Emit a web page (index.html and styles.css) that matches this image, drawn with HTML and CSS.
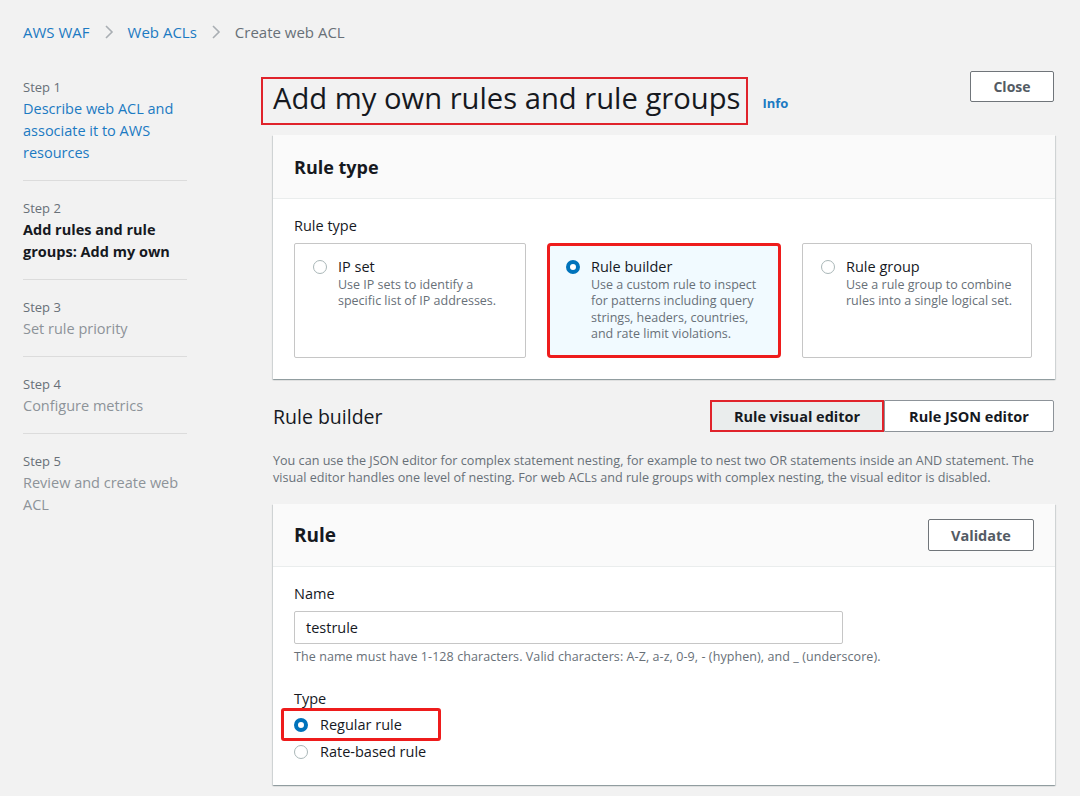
FILE: index.html
```html
<!DOCTYPE html>
<html lang="en">
<head>
<meta charset="utf-8">
<title>Create web ACL</title>
<link rel="stylesheet" href="styles.css">
</head>
<body>
<nav class="crumbs">
  <a class="crumb-link">AWS WAF</a>
  <svg class="chev" width="10" height="16" viewBox="0 0 10 16"><path d="M2 2l6 6-6 6" fill="none" stroke="#a9aeb3" stroke-width="1.6"/></svg>
  <a class="crumb-link">Web ACLs</a>
  <svg class="chev" width="10" height="16" viewBox="0 0 10 16"><path d="M2 2l6 6-6 6" fill="none" stroke="#a9aeb3" stroke-width="1.6"/></svg>
  <span class="crumb-current">Create web ACL</span>
</nav>
<div class="layout">
  <aside class="steps">
    <div class="step">
      <div class="step-num">Step 1</div>
      <div class="step-title link">Describe web ACL and associate it to AWS resources</div>
    </div>
    <div class="step">
      <div class="step-num">Step 2</div>
      <div class="step-title active">Add rules and rule groups: Add my own</div>
    </div>
    <div class="step">
      <div class="step-num">Step 3</div>
      <div class="step-title muted">Set rule priority</div>
    </div>
    <div class="step">
      <div class="step-num">Step 4</div>
      <div class="step-title muted">Configure metrics</div>
    </div>
    <div class="step last">
      <div class="step-num">Step 5</div>
      <div class="step-title muted">Review and create web ACL</div>
    </div>
  </aside>
  <main class="main">
    <div class="page-head">
      <h1 class="page-title marked">Add my own rules and rule groups</h1>
      <a class="info">Info</a>
      <button class="btn close-btn">Close</button>
    </div>

    <section class="panel">
      <div class="panel-head"><h2>Rule type</h2></div>
      <div class="panel-body">
        <div class="field-label">Rule type</div>
        <div class="tiles">
          <div class="tile">
            <span class="radio"></span>
            <div>
              <div class="tile-title">IP set</div>
              <div class="tile-desc">Use IP sets to identify a specific list of IP addresses.</div>
            </div>
          </div>
          <div class="tile selected">
            <span class="radio on"></span>
            <div>
              <div class="tile-title">Rule builder</div>
              <div class="tile-desc">Use a custom rule to inspect for patterns including query strings, headers, countries, and rate limit violations.</div>
            </div>
          </div>
          <div class="tile">
            <span class="radio"></span>
            <div>
              <div class="tile-title">Rule group</div>
              <div class="tile-desc">Use a rule group to combine rules into a single logical set.</div>
            </div>
          </div>
        </div>
      </div>
    </section>

    <div class="builder-head">
      <h2 class="builder-title">Rule builder</h2>
      <div class="seg">
        <button class="seg-btn seg-on">Rule visual editor</button>
        <button class="seg-btn">Rule JSON editor</button>
      </div>
    </div>
    <p class="builder-desc">You can use the JSON editor for complex statement nesting, for example to nest two OR statements inside an AND statement. The visual editor handles one level of nesting. For web ACLs and rule groups with complex nesting, the visual editor is disabled.</p>

    <section class="panel rule-panel">
      <div class="panel-head rule-head">
        <h2>Rule</h2>
        <button class="btn validate-btn">Validate</button>
      </div>
      <div class="panel-body rule-body">
        <div class="field-label">Name</div>
        <div class="input">testrule</div>
        <div class="hint">The name must have 1-128 characters. Valid characters: A-Z, a-z, 0-9, - (hyphen), and _ (underscore).</div>
        <div class="field-label type-label">Type</div>
        <div class="opt marked-opt"><span class="radio on"></span><span>Regular rule</span></div>
        <div class="opt"><span class="radio"></span><span>Rate-based rule</span></div>
      </div>
    </section>
  </main>
</div>
</body>
</html>
```
FILE: styles.css
```css
* { box-sizing: border-box; }
html, body { margin: 0; }
body {
  background: #f2f2f2;
  font-family: "Open Sans", "Noto Sans", sans-serif;
  color: #16191f;
  width: 1080px;
  height: 796px;
  overflow: hidden;
}
a { cursor: pointer; }
button { font-family: inherit; cursor: pointer; }

.crumbs {
  display: flex;
  align-items: flex-start;
  gap: 14px;
  padding: 21px 0 0 23px;
  height: 63px;
  font-size: 15px;
  line-height: 22px;
}
.crumb-link { color: #1c7ac2; }
.crumb-current { color: #687078; }
.chev { display: block; margin-top: 3px; }

.layout {
  display: grid;
  grid-template-columns: 164px 782px;
  column-gap: 86px;
  padding-left: 23px;
}

.steps { padding-top: 14px; }
.step {
  border-bottom: 1px solid #dcdcdc;
  padding: 0 0 16px 0;
  margin-bottom: 17px;
}
.step.last { border-bottom: none; }
.step-num { font-size: 13px; line-height: 20px; color: #687078; margin-bottom: 1px; }
.step-title { font-size: 14.5px; line-height: 22px; }
.step-title.link { color: #1c7ac2; }
.step-title.active { font-weight: 700; color: #16191f; }
.step-title.muted { color: #8d9399; }

.main { min-width: 0; }
.page-head {
  display: flex;
  align-items: center;
  height: 58px;
  margin-top: 6px;
  margin-bottom: 8px;
}
.page-title {
  margin: 0;
  font-size: 29.2px;
  font-weight: 400;
  line-height: 40px;
  color: #16191f;
  position: relative;
}
.marked::after {
  content: "";
  position: absolute;
  left: -12px; right: -8px; top: -1px; bottom: -7px;
  border: 2.5px solid #e0232b;
}
.info {
  color: #1c7ac2;
  font-size: 13px;
  font-weight: 700;
  margin-left: 22px;
  margin-top: 10px;
}
.btn {
  background: #fff;
  border: 1px solid #70757a;
  border-radius: 2px;
  font-weight: 700;
  font-size: 14px;
  color: #545b64;
  padding: 0;
}
.close-btn {
  margin-left: auto;
  margin-right: 1px;
  width: 84px;
  height: 31px;
  align-self: flex-start;
  margin-top: 2px;
}

.panel {
  background: #fff;
  box-shadow: 0 1px 1px rgba(0,28,36,.25), 1px 1px 1px 0 rgba(0,28,36,.1), -1px 1px 1px 0 rgba(0,28,36,.1);
}
.panel-head {
  background: #fafafa;
  border-bottom: 1px solid #eaeded;
  height: 64px;
  padding: 0 21px;
  display: flex;
  align-items: center;
}
.panel-head h2 {
  margin: 0;
  font-size: 18px;
  font-weight: 700;
  color: #16191f;
}
.panel-body { padding: 17px 22px 21px 21px; }
.field-label { font-size: 14.5px; line-height: 20px; color: #16191f; margin-bottom: 7px; }

.tiles {
  display: grid;
  grid-template-columns: 232px 234px 230px;
  column-gap: 21px;
}
.tile {
  border: 1px solid #c6c6c6;
  border-radius: 2px;
  height: 115px;
  padding: 13px 18px 12px 18px;
  display: flex;
  gap: 11px;
}
.tile.selected {
  background: #f1faff;
  border: 3px solid #ee1c1c;
  border-radius: 4px;
  padding: 11px 16px 10px 16px;
}
.tile-title { font-size: 14.5px; line-height: 20px; color: #16191f; }
.tile-desc { font-size: 12.5px; line-height: 16.3px; color: #687078; }

.radio {
  flex: none;
  width: 14px;
  height: 14px;
  border-radius: 50%;
  border: 1.5px solid #aab7b8;
  background: #fff;
  margin-top: 3px;
  display: inline-block;
}
.radio.on {
  border: 4px solid #0073bb;
}

.builder-head {
  display: flex;
  align-items: center;
  margin-top: 21px;
  height: 32px;
}
.builder-title {
  margin: 0;
  font-size: 19.5px;
  font-weight: 400;
  color: #16191f;
}
.seg { margin-left: auto; display: flex; margin-right: 1px; }
.seg-btn {
  height: 32px;
  border: 1px solid #8d9399;
  background: #fff;
  font-weight: 700;
  font-size: 14.5px;
  color: #16191f;
  padding: 0;
  width: 170px;
  border-radius: 0 2px 2px 0;
}
.seg-btn.seg-on {
  width: 174px;
  background: #eaeded;
  border: 2.5px solid #e0232b;
  border-radius: 0;
}
.builder-desc {
  margin: 20px 0 18px 0;
  font-size: 12.6px;
  line-height: 17px;
  color: #687078;
  letter-spacing: 0;
}

.rule-head { justify-content: space-between; height: 63px; }
.rule-head h2 { font-size: 19px; }
.validate-btn {
  width: 106px;
  height: 32px;
  font-size: 14.5px;
  margin-right: 0;
}
.rule-body { padding: 17px 21px 20px 21px; }
.input {
  width: 549px;
  height: 33px;
  border: 1px solid #c6c6c6;
  border-radius: 2px;
  padding: 5px 11px;
  font-size: 14.5px;
  line-height: 21px;
  color: #16191f;
}
.hint {
  margin-top: 5px;
  font-size: 12.5px;
  line-height: 16px;
  color: #687078;
  letter-spacing: 0.08px;
}
.type-label { margin-top: 24px; margin-bottom: 2px; }
.opt {
  display: flex;
  align-items: center;
  gap: 12px;
  height: 27px;
  font-size: 14.5px;
  color: #16191f;
}
.opt .radio { margin-top: 0; }
.marked-opt {
  position: relative;
  width: 133px;
}
.marked-opt::after {
  content: "";
  position: absolute;
  left: -13px; right: -14px; top: -3px; bottom: -3px;
  border: 3px solid #ee1c1c;
  border-radius: 3px;
}
```
